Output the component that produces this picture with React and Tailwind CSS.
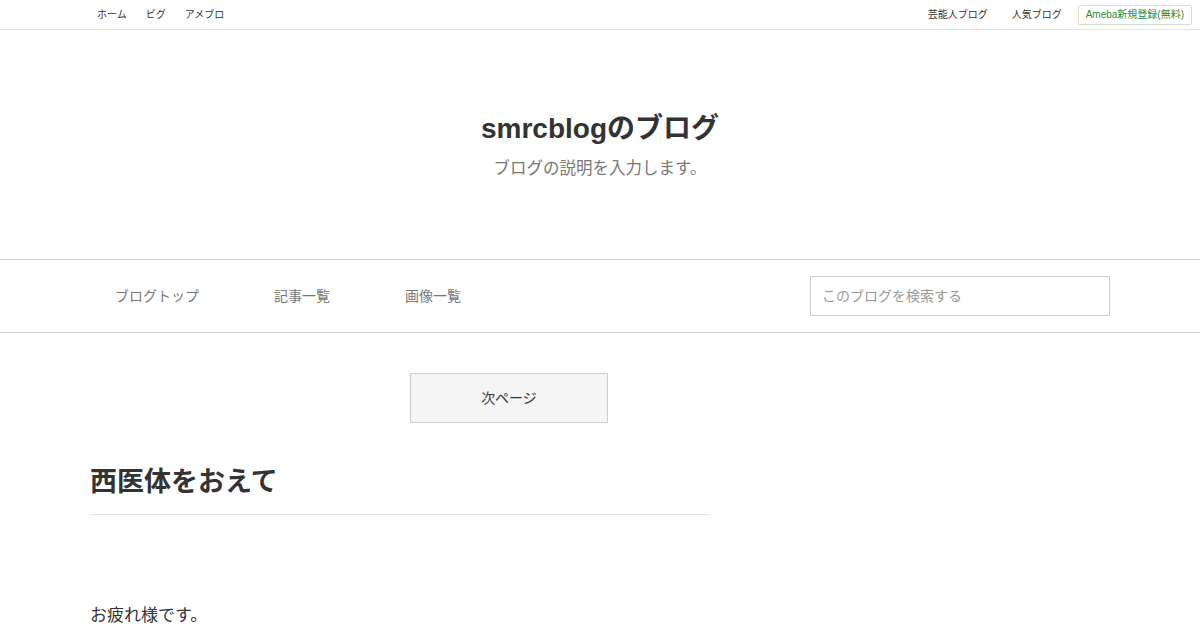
export default function App() {
  const font = { fontFamily: '"Liberation Sans", "Noto Sans CJK JP", sans-serif' };
  return (
    <div className="w-[1200px] h-[630px] overflow-hidden bg-white text-[#333]" style={font}>
      {/* top bar */}
      <div className="h-[30px] border-b border-[#e3e3e3] flex items-center justify-between pl-[87px] pr-[8px]">
        <div className="flex items-center text-[10px] text-[#333]">
          <span className="px-[10px]">ホーム</span>
          <span className="px-[9px]">ビグ</span>
          <span className="px-[10px]">アメブロ</span>
        </div>
        <div className="flex items-center text-[10px] text-[#333]">
          <span className="mr-[24px]">芸能人ブログ</span>
          <span className="mr-[16px]">人気ブログ</span>
          <span className="h-[20px] px-[7px] flex items-center border border-[#cfe3cf] text-[#2d8a3a] rounded-[2px]">Ameba新規登録(無料)</span>
        </div>
      </div>
      {/* header */}
      <div className="h-[229px] flex flex-col items-center pt-[81px]">
        <h1 className="text-[28px] font-bold leading-[36px] text-[#333]">smrcblogのブログ</h1>
        <p className="mt-[10px] text-[16.5px] leading-[22px] text-[#777]">ブログの説明を入力します。</p>
      </div>
      {/* nav */}
      <div className="border-y border-[#ccc] h-[74px]">
        <div className="w-[1020px] mx-auto h-full flex items-center justify-between">
          <div className="flex items-center text-[14px] text-[#777] pl-[25px]">
            <span>ブログトップ</span>
            <span className="ml-[75px]">記事一覧</span>
            <span className="ml-[75px]">画像一覧</span>
          </div>
          <div className="w-[300px] h-[40px] border border-[#ccc] flex items-center px-[11px] text-[14px] text-[#999]">
            このブログを検索する
          </div>
        </div>
      </div>
      {/* main */}
      <div className="w-[1020px] mx-auto">
        <div className="w-[620px]">
          <div className="pt-[40px] flex">
            <div className="ml-[320px] w-[198px] h-[50px] bg-[#f5f5f5] border border-[#ccc] flex items-center justify-center text-[14px] text-[#333]">
              次ページ
            </div>
          </div>
          <h2 className="mt-[41px] text-[27px] font-bold leading-[36px] text-[#333] pb-[14px] border-b border-[#e3e3e3]">
            西医体をおえて
          </h2>
          <p className="mt-[89px] text-[17px] leading-[24px] text-[#333]">お疲れ様です。</p>
        </div>
      </div>
    </div>
  );
}
